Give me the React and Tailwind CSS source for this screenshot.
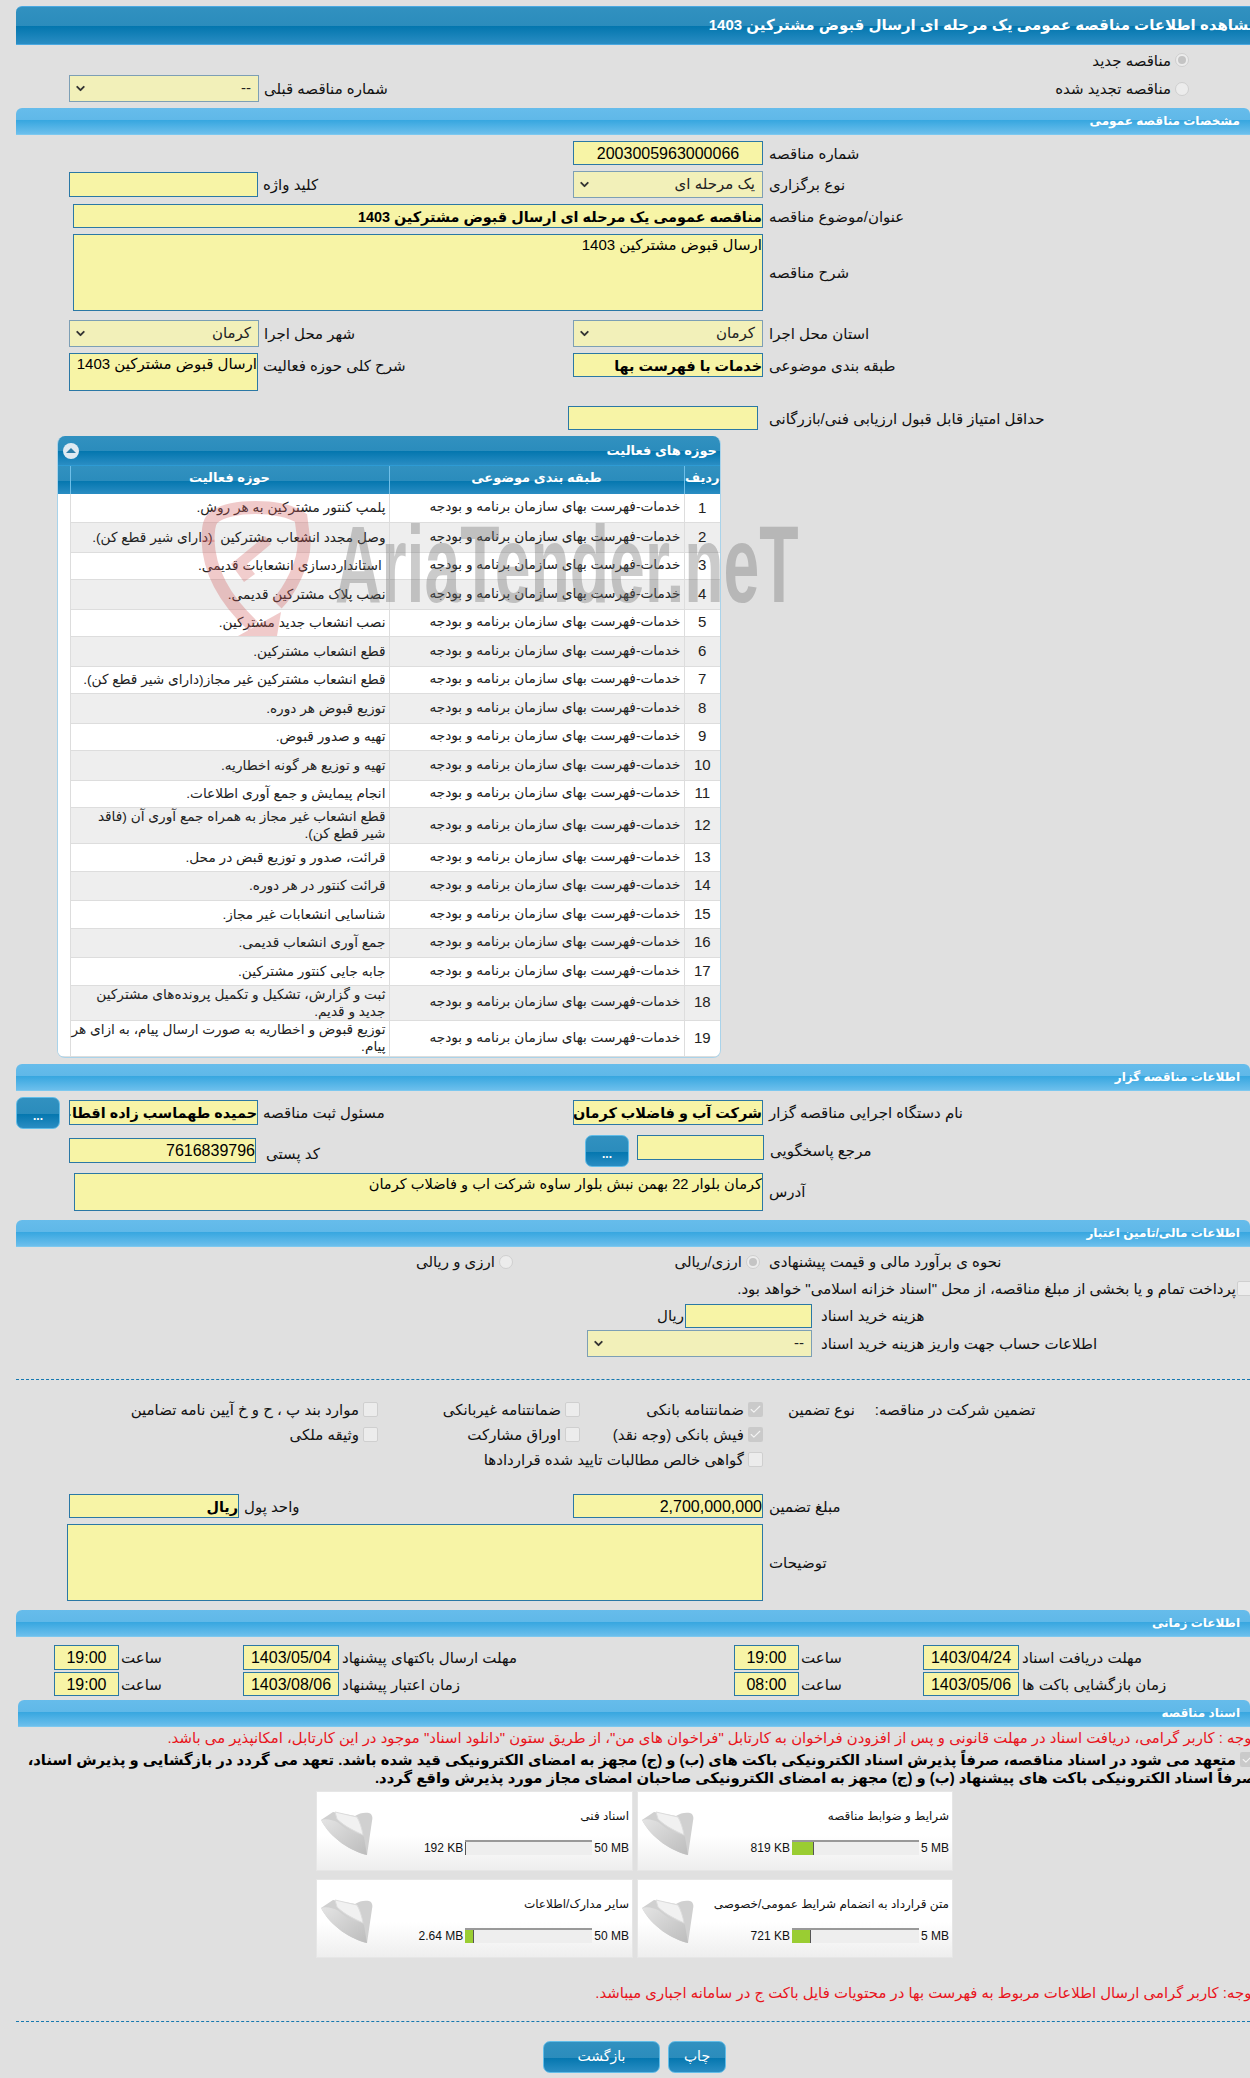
import React from "react";
import { ChevronDown, Check } from "lucide-react";

const DARK = "bg-[linear-gradient(#3191c0_0%,#2b8cbc_52%,#0376ae_52%,#2a8dc3_100%)]";
const LIGHT = "bg-[linear-gradient(#66bceb_0%,#5fb8e8_48%,#38a7e0_48%,#6cbfec_100%)]";

const rows = [
  ["پلمپ کنتور مشترکین به هر روش.", 28],
  ["وصل مجدد انشعاب مشترکین  (دارای شیر قطع کن).", 30],
  [" استانداردسازی انشعابات قدیمی.", 27],
  ["نصب پلاک مشترکین قدیمی.", 30],
  ["نصب انشعاب جدید مشترکین.", 27],
  ["قطع انشعاب مشترکین.", 30],
  ["قطع انشعاب مشترکین غیر مجاز(دارای شیر قطع کن).", 27],
  ["توزیع قبوض هر دوره.", 30],
  ["تهیه و صدور قبوض.", 27],
  ["تهیه و توزیع هر گونه اخطاریه.", 30],
  ["انجام پیمایش و جمع آوری اطلاعات.", 27],
  ["قطع انشعاب غیر مجاز به همراه جمع آوری آن (فاقد\nشیر قطع کن).", 36],
  ["قرائت، صدور و توزیع قبض در محل.", 28],
  ["قرائت کنتور در هر دوره.", 29],
  ["شناسایی انشعابات غیر مجاز.", 28],
  ["جمع آوری انشعاب قدیمی.", 29],
  ["جابه جایی کنتور مشترکین.", 28],
  ["ثبت و گزارش، تشکیل و تکمیل پرونده‌های مشترکین\nجدید و قدیم.", 35],
  ["توزیع قبوض و اخطاریه به صورت ارسال پیام، به ازای هر\nپیام.", 36],
];

function Bar({ title, className = "" }) {
  return (
    <div className={`h-[27px] ml-[16px] pr-[10px] flex items-center justify-end border-b border-[#7cc8ef] rounded-t-md text-white text-[12px] font-bold ${LIGHT} ${className}`} dir="ltr">
      <span dir="rtl">{title}</span>
    </div>
  );
}

function Label({ children, className = "" }) {
  return <span dir="rtl" className={`whitespace-nowrap text-[15px] text-[#111] pt-[2px] ${className}`}>{children}</span>;
}

function Field({ className = "", bold, children }) {
  return (
    <div dir="rtl" className={`shrink-0 bg-[#f7f4a6] border border-[#2b78a5] overflow-hidden whitespace-nowrap leading-[24px] text-black ${bold ? "font-bold text-[14.4px]" : "text-[16px]"} ${className}`}>
      {children}
    </div>
  );
}

function Select({ className = "", value }) {
  return (
    <div className={`shrink-0 h-[27px] bg-[#f2f0b9] border border-[#7d9fb5] flex items-center justify-between pl-[4px] pr-[7px] ${className}`}>
      <ChevronDown size={13} strokeWidth={3.5} className="text-[#333]" />
      <span dir="rtl" className="text-[15px] text-[#222]">{value}</span>
    </div>
  );
}

function Radio({ on }) {
  return (
    <span className="shrink-0 w-[14px] h-[14px] rounded-full bg-[#ececec] border border-[#cfcfcf] flex items-center justify-center">
      {on && <span className="w-[8px] h-[8px] rounded-full bg-[#c4c4c4]" />}
    </span>
  );
}

function Box({ on }) {
  return (
    <span className={`shrink-0 w-[15px] h-[15px] rounded-[2px] flex items-center justify-center ${on ? "bg-[#cacaca]" : "bg-[#ececec] border border-[#cfcfcf]"}`}>
      {on && <Check size={13} strokeWidth={2} className="text-[#f4f4f4]" />}
    </span>
  );
}

function Opt({ on, children }) {
  return (
    <div className="flex justify-end items-center gap-[4px]">
      <Label>{children}</Label>
      <Box on={on} />
    </div>
  );
}

function Row({ left, right, className = "" }) {
  return (
    <div className={`grid grid-cols-[573px_677px] ${className}`}>
      <div className="pl-[69px] flex items-center">{left}</div>
      <div className="flex items-center">{right}</div>
    </div>
  );
}

function DotLine({ className = "" }) {
  return <div className={`ml-[16px] border-t border-dashed border-[#1678b0] ${className}`} />;
}

function SmallBtn({ className = "" }) {
  return (
    <div className={`shrink-0 h-[32px] w-[44px] rounded-[7px] border border-[#62bde8] text-white text-[12px] font-bold flex items-center justify-center pt-[6px] ${DARK} ${className}`}>...</div>
  );
}

function Folder() {
  return (
    <svg width="52" height="47" viewBox="0 0 52 47" className="shrink-0 mt-[17px] ml-[4px]">
      <defs>
        <linearGradient id="fld" x1="0" y1="0" x2="1" y2="1">
          <stop offset="0" stopColor="#e4e4e4" />
          <stop offset="1" stopColor="#bcbcbc" />
        </linearGradient>
      </defs>
      <path d="M0 11 L12 3 L34 7 C38 4 44 3 48 4 C51 5 52 8 51 12 L46 46 C30 42 10 30 0 11 Z" fill="#d0d0d0" />
      <path d="M14 3 L36 8 C39 13 41 20 42 26 C34 22 24 18 16 10 Z" fill="#f1f1f1" stroke="#dcdcdc" strokeWidth="1" />
      <path d="M0 11 C5 9 12 11 16 13 C22 17 26 22 33 24 C38 25 41 25 43 28 L46 46 C30 42 10 30 0 11 Z" fill="url(#fld)" />
    </svg>
  );
}

function DocCard({ title, value, max, pct }) {
  return (
    <div className="flex h-full border border-[#e6e6e6] bg-[linear-gradient(#ffffff_0%,#ffffff_55%,#eeeeee_100%)]">
      <Folder />
      <div className="flex-1 flex flex-col items-end pr-[3px]">
        <span dir="rtl" className="mt-[15px] h-[18px] text-[12px] leading-[18px] text-[#111] whitespace-nowrap">{title}</span>
        <div className="mt-[14px] flex items-center gap-[2px] text-[12px] text-[#111] font-['Liberation_Sans',sans-serif]">
          <span className="whitespace-nowrap">{value}</span>
          <div className="w-[127px] h-[15px] bg-[#eeeeee] border-t-2 border-[#999]">
            <div className="h-full bg-[#9acd32] border-r border-[#555]" style={{ width: pct }} />
          </div>
          <span className="whitespace-nowrap">{max}</span>
        </div>
      </div>
    </div>
  );
}

function Watermark() {
  return (
    <div className="absolute left-[201px] top-[500px] w-[600px] h-[140px] pointer-events-none">
      <svg width="112" height="138" viewBox="0 0 112 138" className="absolute left-0 top-0">
        <path d="M7 42 C7 28 8 22 12 18 C28 4 80 4 100 18 L103 42 C104 62 88 92 76 104" fill="none" stroke="#cf5a5a" strokeOpacity="0.32" strokeWidth="13" />
        <path d="M7 40 C8 72 24 100 52 126" fill="none" stroke="#cf5a5a" strokeOpacity="0.32" strokeWidth="13" />
        <path d="M30 64 L64 36 L70 44 L46 64 L54 74 L43 82 Z" fill="#cf5a5a" fillOpacity="0.3" />
        <path d="M37 136 L76 136 L80 112 Z" fill="#cf5a5a" fillOpacity="0.32" />
      </svg>
      <span className="absolute left-[134px] top-[9px] text-[#6a6a6a]/35 text-[110px] leading-[110px] font-bold whitespace-nowrap origin-left scale-x-[0.585] font-['Liberation_Sans',sans-serif]">AriaTender.neT</span>
    </div>
  );
}

export default function App() {
  return (
    <div className="relative w-[1250px] h-[2078px] overflow-hidden bg-[#e0e0e0] pt-[6px] font-['Liberation_Sans','DejaVu_Sans',sans-serif]">
      <div className={`ml-[16px] w-[1242px] h-[39px] flex items-center justify-end border-y border-[#4aa8e0] rounded-t-md text-white text-[15px] font-bold ${DARK}`}>
        <span dir="rtl" className="whitespace-nowrap">مشاهده اطلاعات مناقصه عمومی یک مرحله ای ارسال قبوض مشترکین 1403</span>
      </div>

      <div className="h-[30px] flex items-center justify-end pr-[61px] gap-[4px]">
        <Label>مناقصه جدید</Label>
        <Radio on />
      </div>
      <div className="h-[27px] flex items-center justify-between pl-[69px] pr-[61px]">
        <div className="flex items-center gap-[5px]">
          <Select className="w-[190px]" value="--" />
          <Label>شماره مناقصه قبلی</Label>
        </div>
        <div className="flex items-center gap-[4px]">
          <Label>مناقصه تجدید شده</Label>
          <Radio />
        </div>
      </div>

      <Bar title="مشخصات مناقصه عمومی" className="mt-[6px]" />

      <Row className="mt-[6px] h-[24px]" right={<><Field className="w-[190px] h-[24px] text-center">2003005963000066</Field><Label className="ml-[6px]">شماره مناقصه</Label></>} />
      <Row className="mt-[6px] h-[27px]"
        left={<><Field className="w-[189px] h-[25px]" /><Label className="ml-[5px]">کلید واژه</Label></>}
        right={<><Select className="w-[190px]" value="یک مرحله ای" /><Label className="ml-[6px]">نوع برگزاری</Label></>} />
      <div className="mt-[6px] h-[24px] flex items-center pl-[73px]">
        <Field bold className="w-[690px] h-[24px]">مناقصه عمومی یک مرحله ای ارسال قبوض مشترکین 1403</Field>
        <Label className="ml-[6px]">عنوان/موضوع مناقصه</Label>
      </div>
      <div className="mt-[6px] h-[77px] flex items-center pl-[73px]">
        <Field className="w-[690px] h-[77px] !text-[15px] !leading-[20px]">ارسال قبوض مشترکین 1403</Field>
        <Label className="ml-[6px]">شرح مناقصه</Label>
      </div>
      <Row className="mt-[9px] h-[27px]"
        left={<><Select className="w-[190px]" value="کرمان" /><Label className="ml-[5px]">شهر محل اجرا</Label></>}
        right={<><Select className="w-[190px]" value="کرمان" /><Label className="ml-[6px]">استان محل اجرا</Label></>} />
      <div className="mt-[6px] h-[38px] grid grid-cols-[573px_677px]">
        <div className="pl-[69px] flex items-start">
          <Field className="w-[189px] h-[38px] !text-[15px] !leading-[20px]">ارسال قبوض مشترکین 1403</Field>
          <Label className="ml-[5px]">شرح کلی حوزه فعالیت</Label>
        </div>
        <div className="flex items-start">
          <Field bold className="w-[190px] h-[24px]">خدمات با فهرست بها</Field>
          <Label className="ml-[6px]">طبقه بندی موضوعی</Label>
        </div>
      </div>
      <div className="mt-[15px] h-[24px] flex items-center pl-[568px]">
        <Field className="w-[190px] h-[24px]" />
        <Label className="ml-[11px]">حداقل امتیاز قابل قبول ارزیابی فنی/بازرگانی</Label>
      </div>

      {/* جدول حوزه ها */}
      <div className="mt-[6px] ml-[57px] w-[664px] rounded-[8px] border border-t-0 border-[#a9d3ea] overflow-hidden">
        <div className={`h-[30px] flex items-center justify-between pl-[5px] pr-[3px] border-b border-[#2e9bd4] ${DARK}`}>
          <span className="w-[16px] h-[16px] rounded-full bg-[#dfeaf2] flex items-center justify-center">
            <span className="w-0 h-0 border-x-[5px] border-x-transparent border-b-[5px] border-b-[#2d7da8]" />
          </span>
          <span dir="rtl" className="text-white font-bold text-[13px]">حوزه های فعالیت</span>
        </div>
        <table dir="rtl" className="w-full table-fixed border-collapse">
          <colgroup>
            <col className="w-[36px]" />
            <col className="w-[295px]" />
            <col className="w-[319px]" />
            <col />
          </colgroup>
          <thead>
            <tr className={`h-[28px] text-white text-[13px] ${DARK}`}>
              <th className="border-l border-[#6fbfe8] font-bold pb-[4px]">ردیف</th>
              <th className="border-l border-[#6fbfe8] font-bold pb-[4px]">طبقه بندی موضوعی</th>
              <th className="border-l border-[#6fbfe8] font-bold pb-[4px]">حوزه فعالیت</th>
              <th />
            </tr>
          </thead>
          <tbody className="text-[13.7px] text-[#222]">
            {rows.map(([text, h], i) => (
              <tr key={i} style={{ height: h }} className={i % 2 ? "bg-[#eeeeee]" : "bg-white"}>
                <td className="border-l border-b border-[#dddddd] text-center text-[15px]">{i + 1}</td>
                <td className="border-l border-b border-[#dddddd] text-right pr-[3px] whitespace-nowrap">خدمات-فهرست بهای سازمان برنامه و بودجه</td>
                <td className="border-l border-b border-[#dddddd] text-right pr-[3px] leading-[17px] whitespace-pre">{text}</td>
                <td className="bg-white" />
              </tr>
            ))}
          </tbody>
        </table>
      </div>

      <Bar title="اطلاعات مناقصه گزار" className="mt-[6px]" />

      <div className="mt-[6px] h-[32px] flex items-center pl-[16px]">
        <SmallBtn />
        <Field bold className="ml-[9px] w-[189px] h-[25px]">حمیده طهماسب زاده اقطاعی</Field>
        <Label className="ml-[5px]">مسئول ثبت مناقصه</Label>
        <div className="ml-auto flex items-center w-[677px]">
          <Field bold className="w-[190px] h-[25px]">شرکت آب و فاضلاب کرمان</Field>
          <Label className="ml-[6px]">نام دستگاه اجرایی مناقصه گزار</Label>
        </div>
      </div>
      <div className="mt-[6px] h-[32px] grid grid-cols-[585px_665px]">
        <div className="pl-[69px] flex items-start pt-[3px]">
          <Field className="w-[187px] h-[25px]">7616839796</Field>
          <Label className="ml-[10px] mt-[3px]">کد پستی</Label>
        </div>
        <div className="flex items-start">
          <SmallBtn className="w-[43px]" />
          <Field className="ml-[8px] w-[127px] h-[25px]" />
          <Label className="ml-[6px] mt-[3px]">مرجع پاسخگویی</Label>
        </div>
      </div>
      <div className="mt-[6px] h-[38px] flex items-center pl-[74px]">
        <Field className="w-[689px] h-[38px] !text-[14.6px] !leading-[20px]">کرمان بلوار 22 بهمن نبش بلوار ساوه شرکت اب و فاضلاب کرمان</Field>
        <Label className="ml-[6px]">آدرس</Label>
      </div>

      <Bar title="اطلاعات مالی/تامین اعتبار" className="mt-[9px]" />

      <div className="h-[30px] grid grid-cols-[513px_247px_1fr] items-center">
        <div className="flex justify-end items-center gap-[4px]">
          <Label>ارزی و ریالی</Label>
          <Radio />
        </div>
        <div className="flex justify-end items-center gap-[4px]">
          <Label>ارزی/ریالی</Label>
          <Radio on />
        </div>
        <div className="pl-[9px] flex items-center">
          <Label>نحوه ی برآورد مالی و قیمت پیشنهادی</Label>
        </div>
      </div>
      <div className="h-[24px] flex items-center justify-end gap-[1px] -mr-[2px]">
        <Label>پرداخت تمام و یا بخشی از مبلغ مناقصه، از محل "اسناد خزانه اسلامی" خواهد بود.</Label>
        <Box />
      </div>
      <div className="mt-[3px] h-[24px] flex items-center pl-[660px]">
        <Label className="w-[24px]">ریال</Label>
        <Field className="ml-[1px] w-[127px] h-[24px]" />
        <Label className="ml-[9px]">هزینه خرید اسناد</Label>
      </div>
      <div className="mt-[2px] h-[27px] flex items-center pl-[587px]">
        <Select className="w-[225px]" value="--" />
        <Label className="ml-[9px]">اطلاعات حساب جهت واریز هزینه خرید اسناد</Label>
      </div>

      <DotLine className="mt-[22px]" />

      <div className="mt-[17px] grid grid-cols-[378px_202px_183px_1fr] auto-rows-[25px] items-center">
        <Opt>موارد بند پ ، ح و خ آیین نامه تضامین</Opt>
        <Opt>ضمانتنامه غیربانکی</Opt>
        <Opt on>ضمانتنامه بانکی</Opt>
        <div className="flex items-center pl-[25px]">
          <Label>نوع تضمین</Label>
          <Label className="ml-[20px]">تضمین شرکت در مناقصه:</Label>
        </div>
        <Opt>وثیقه ملکی</Opt>
        <Opt>اوراق مشارکت</Opt>
        <Opt on>فیش بانکی (وجه نقد)</Opt>
        <div />
        <div />
        <div />
        <Opt>گواهی خالص مطالبات تایید شده قراردادها</Opt>
      </div>

      <Row className="mt-[22px] h-[24px]"
        left={<><Field bold className="w-[170px] h-[24px]">ریال</Field><Label className="ml-[5px]">واحد پول</Label></>}
        right={<><Field className="w-[190px] h-[24px]">2,700,000,000</Field><Label className="ml-[6px]">مبلغ تضمین</Label></>} />
      <div className="mt-[6px] h-[77px] flex items-center pl-[67px]">
        <Field className="w-[696px] h-[77px]" />
        <Label className="ml-[6px]">توضیحات</Label>
      </div>

      <Bar title="اطلاعات زمانی" className="mt-[9px]" />

      <div className="mt-[8px] h-[25px] pl-[54px] grid grid-cols-[189px_491px_189px_1fr] items-center">
        <div className="flex items-center"><Field className="w-[65px] h-[25px] text-center">19:00</Field><Label className="ml-[2px]">ساعت</Label></div>
        <div className="flex items-center"><Field className="w-[96px] h-[25px] text-center">1403/05/04</Field><Label className="ml-[3px]">مهلت ارسال باکتهای پیشنهاد</Label></div>
        <div className="flex items-center"><Field className="w-[65px] h-[25px] text-center">19:00</Field><Label className="ml-[2px]">ساعت</Label></div>
        <div className="flex items-center"><Field className="w-[96px] h-[25px] text-center">1403/04/24</Field><Label className="ml-[3px]">مهلت دریافت اسناد</Label></div>
      </div>
      <div className="mt-[2px] h-[24px] pl-[54px] grid grid-cols-[189px_491px_189px_1fr] items-center">
        <div className="flex items-center"><Field className="w-[65px] h-[24px] text-center">19:00</Field><Label className="ml-[2px]">ساعت</Label></div>
        <div className="flex items-center"><Field className="w-[96px] h-[24px] text-center">1403/08/06</Field><Label className="ml-[3px]">زمان اعتبار پیشنهاد</Label></div>
        <div className="flex items-center"><Field className="w-[65px] h-[24px] text-center">08:00</Field><Label className="ml-[2px]">ساعت</Label></div>
        <div className="flex items-center"><Field className="w-[96px] h-[24px] text-center">1403/05/06</Field><Label className="ml-[3px]">زمان بازگشایی باکت ها</Label></div>
      </div>

      <Bar title="اسناد مناقصه" className="mt-[4px] !ml-[18px]" />

      <div className="w-[1256px] h-[24px] flex items-center justify-end">
        <span dir="rtl" className="text-[14.9px] text-[#e8141c] whitespace-nowrap">توجه : کاربر گرامی، دریافت اسناد در مهلت قانونی و پس از افزودن فراخوان به کارتابل "فراخوان های من"، از طریق ستون "دانلود اسناد" موجود در این کارتابل، امکانپذیر می باشد.</span>
      </div>
      <div className="w-[1256px] flex flex-col items-end text-[14.8px] font-bold text-black leading-[18px]">
        <div className="flex items-center gap-[4px] pr-[1px]">
          <span dir="rtl" className="whitespace-nowrap">متعهد می شود در اسناد مناقصه، صرفاً پذیرش اسناد الکترونیکی باکت های (ب) و (ج) مجهز به امضای الکترونیکی قید شده باشد. تعهد می گردد در بازگشایی و پذیرش اسناد،</span>
          <Box on />
        </div>
        <span dir="rtl" className="whitespace-nowrap">صرفاً اسناد الکترونیکی باکت های پیشنهاد (ب) و (ج) مجهز به امضای الکترونیکی صاحبان امضای مجاز مورد پذیرش واقع گردد.</span>
      </div>

      <div className="mt-[4px] ml-[316px] w-[637px] grid grid-cols-[317px_316px] grid-rows-[80px_79px] gap-x-[4px] gap-y-[8px]">
        <DocCard title="اسناد فنی" value="192 KB" max="50 MB" pct={1} />
        <DocCard title="شرایط و ضوابط مناقصه" value="819 KB" max="5 MB" pct={22} />
        <DocCard title="سایر مدارک/اطلاعات" value="2.64 MB" max="50 MB" pct={9} />
        <DocCard title="متن قرارداد به انضمام شرایط عمومی/خصوصی" value="721 KB" max="5 MB" pct={19} />
      </div>

      <div className="mt-[25px] w-[1256px] h-[22px] flex items-center justify-end">
        <span dir="rtl" className="text-[14.9px] text-[#e8141c] whitespace-nowrap">توجه: کاربر گرامی ارسال اطلاعات مربوط به فهرست بها در محتویات فایل باکت ج در سامانه اجباری میباشد.</span>
      </div>

      <DotLine className="mt-[16px]" />

      <div className="mt-[19px] flex pl-[543px] gap-[8px] text-white text-[14px]">
        <div className={`w-[117px] h-[32px] rounded-[7px] border border-[#62bde8] flex items-center justify-center ${DARK}`}>بازگشت</div>
        <div className={`w-[58px] h-[32px] rounded-[7px] border border-[#62bde8] flex items-center justify-center ${DARK}`}>چاپ</div>
      </div>

      <div className="mt-[6px] ml-[12px] h-px bg-white" />

      <Watermark />
    </div>
  );
}
